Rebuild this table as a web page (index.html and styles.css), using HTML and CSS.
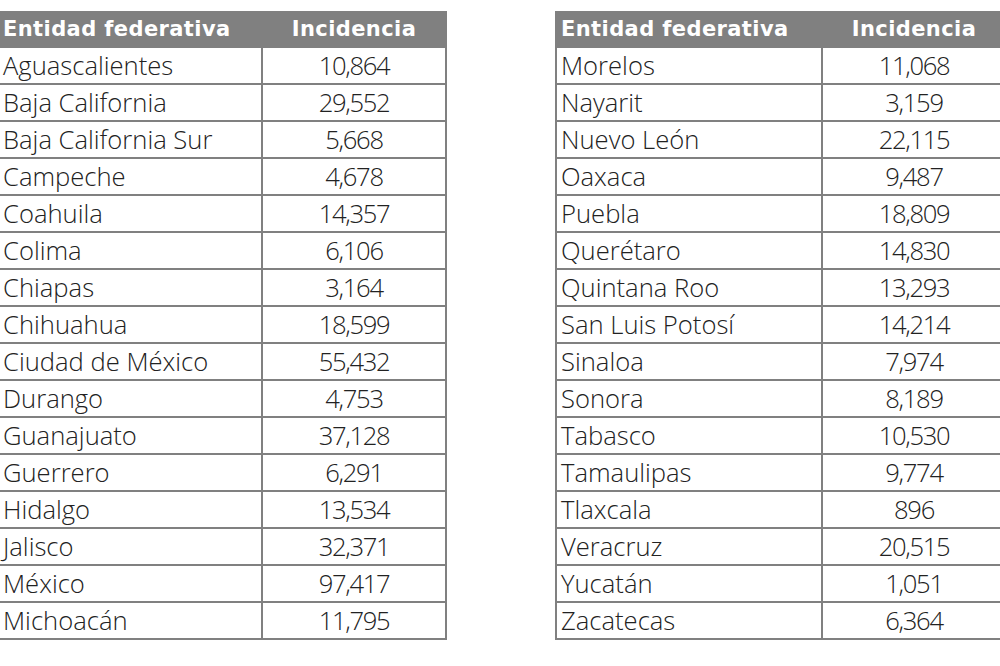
FILE: index.html
```html
<!DOCTYPE html>
<html lang="es">
<head>
<meta charset="utf-8">
<title>Incidencia por entidad federativa</title>
<link rel="stylesheet" href="styles.css">
</head>
<body>
<div class="page">
  <div class="tbl tbl-left">
    <div class="cell head name">Entidad federativa</div><div class="cell head num">Incidencia</div>
    <div class="cell name">Aguascalientes</div><div class="cell num">10,864</div>
    <div class="cell name">Baja California</div><div class="cell num">29,552</div>
    <div class="cell name">Baja California Sur</div><div class="cell num">5,668</div>
    <div class="cell name">Campeche</div><div class="cell num">4,678</div>
    <div class="cell name">Coahuila</div><div class="cell num">14,357</div>
    <div class="cell name">Colima</div><div class="cell num">6,106</div>
    <div class="cell name">Chiapas</div><div class="cell num">3,164</div>
    <div class="cell name">Chihuahua</div><div class="cell num">18,599</div>
    <div class="cell name">Ciudad de México</div><div class="cell num">55,432</div>
    <div class="cell name">Durango</div><div class="cell num">4,753</div>
    <div class="cell name">Guanajuato</div><div class="cell num">37,128</div>
    <div class="cell name">Guerrero</div><div class="cell num">6,291</div>
    <div class="cell name">Hidalgo</div><div class="cell num">13,534</div>
    <div class="cell name">Jalisco</div><div class="cell num">32,371</div>
    <div class="cell name">México</div><div class="cell num">97,417</div>
    <div class="cell name">Michoacán</div><div class="cell num">11,795</div>
  </div>
  <div class="tbl tbl-right">
    <div class="cell head name">Entidad federativa</div><div class="cell head num">Incidencia</div>
    <div class="cell name">Morelos</div><div class="cell num">11,068</div>
    <div class="cell name">Nayarit</div><div class="cell num">3,159</div>
    <div class="cell name">Nuevo León</div><div class="cell num">22,115</div>
    <div class="cell name">Oaxaca</div><div class="cell num">9,487</div>
    <div class="cell name">Puebla</div><div class="cell num">18,809</div>
    <div class="cell name">Querétaro</div><div class="cell num">14,830</div>
    <div class="cell name">Quintana Roo</div><div class="cell num">13,293</div>
    <div class="cell name">San Luis Potosí</div><div class="cell num">14,214</div>
    <div class="cell name">Sinaloa</div><div class="cell num">7,974</div>
    <div class="cell name">Sonora</div><div class="cell num">8,189</div>
    <div class="cell name">Tabasco</div><div class="cell num">10,530</div>
    <div class="cell name">Tamaulipas</div><div class="cell num">9,774</div>
    <div class="cell name">Tlaxcala</div><div class="cell num">896</div>
    <div class="cell name">Veracruz</div><div class="cell num">20,515</div>
    <div class="cell name">Yucatán</div><div class="cell num">1,051</div>
    <div class="cell name">Zacatecas</div><div class="cell num">6,364</div>
  </div>
</div>
</body>
</html>
```
FILE: styles.css
```css
html, body {
  margin: 0;
  padding: 0;
  overflow: hidden;
  background: #ffffff;
}

.page {
  display: flex;
  align-items: flex-start;
  gap: 108px;
  padding-top: 11px;
  margin-left: -3px;
  width: 1020px;
}

.tbl {
  display: grid;
  border-left: 2px solid #808080;
  flex: none;
}

.tbl-left {
  grid-template-columns: 264px 184px;
}

.tbl-right {
  grid-template-columns: 266px 184px;
}

.cell {
  box-sizing: border-box;
  height: 37px;
  display: flex;
  align-items: center;
  border-right: 2px solid #808080;
  border-bottom: 2px solid #808080;
  font-family: "Open Sans", "Liberation Sans", sans-serif;
  font-weight: 300;
  font-size: 25.6px;
  color: #222222;
  white-space: nowrap;
  overflow: hidden;
  line-height: 1;
}

.name {
  padding-left: 4px;
}

.num {
  justify-content: center;
  letter-spacing: -1.3px;
}

.cell.head {
  background: #808080;
  color: #ffffff;
  font-family: "DejaVu Sans", "Liberation Sans", sans-serif;
  font-weight: bold;
  font-size: 21px;
  letter-spacing: 0.4px;
  padding-top: 1px;
}
```
